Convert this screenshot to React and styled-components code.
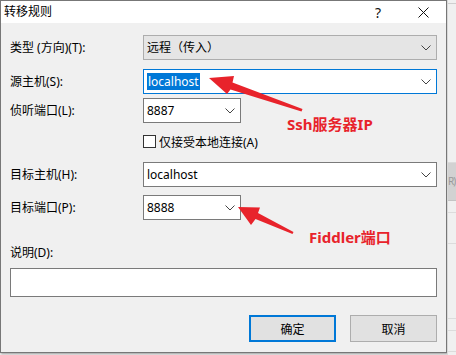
import styled, { createGlobalStyle } from "styled-components";

const GlobalStyle = createGlobalStyle`
  html, body {
    margin: 0;
    padding: 0;
    background: #f0f0f0;
  }
  body {
    font-family: "Noto Sans", "Noto Sans CJK SC", sans-serif;
    font-size: 12px;
    color: #000;
    overflow: hidden;
  }
`;

const Desktop = styled.div`
  position: relative;
  width: 456px;
  height: 355px;
  display: flex;
  overflow: hidden;
`;

const Dialog = styled.div`
  width: 445px;
  height: 351px;
  border: 1px solid #777;
  background: #f0f0f0;
  box-shadow: 1px 1px 2px rgba(0, 0, 0, 0.35);
  display: flex;
  flex-direction: column;
  flex-shrink: 0;
`;

const TitleBar = styled.div`
  height: 22px;
  background: #fff;
  display: flex;
  align-items: center;
  padding-left: 3px;
`;

const Title = styled.div`
  flex: 1;
  font-size: 12px;
  line-height: 16px;
`;

const TitleButton = styled.div`
  width: ${(p) => p.w}px;
  display: flex;
  justify-content: center;
  align-items: center;
  font-size: 14px;
  color: #111;
`;

const Body = styled.div`
  padding: 0 9px 0 9px;
  display: flex;
  flex-direction: column;
`;

const Row = styled.div`
  display: flex;
  align-items: center;
  margin-top: ${(p) => p.mt}px;
`;

const Label = styled.div`
  width: 133px;
  line-height: 16px;
  white-space: nowrap;
`;

const Combo = styled.div`
  box-sizing: border-box;
  height: 25px;
  width: ${(p) => (p.narrow ? "98px" : "294px")};
  border: 1px solid ${(p) => (p.focus ? "#0078d7" : p.disabled ? "#adadad" : "#7a7a7a")};
  background: ${(p) => (p.disabled ? "#e5e5e5" : "#fff")};
  display: flex;
  align-items: center;
  padding: 0 5px 0 3px;
`;

const Value = styled.span`
  flex: 1;
  line-height: 17px;
  white-space: nowrap;
`;

const Selected = styled.span`
  background: #0078d7;
  color: #fff;
  padding: 0 1px;
`;

const Chevron = () => (
  <svg width="10" height="6" viewBox="0 0 10 6">
    <path d="M0.5 0.5 L5 5 L9.5 0.5" fill="none" stroke="#444" strokeWidth="1" />
  </svg>
);

const CheckRow = styled.label`
  display: flex;
  align-items: center;
  gap: 3px;
  margin-left: 133px;
  margin-top: ${(p) => p.mt}px;
  height: 13px;
`;

const Box = styled.span`
  box-sizing: border-box;
  width: 13px;
  height: 13px;
  border: 1px solid #333;
  background: #fff;
`;

const Note = styled.div`
  box-sizing: border-box;
  height: 29px;
  width: 427px;
  border: 1px solid #7a7a7a;
  background: #fff;
  margin-top: ${(p) => p.mt}px;
`;

const Buttons = styled.div`
  display: flex;
  justify-content: flex-end;
  gap: 14px;
  margin-top: 18px;
  width: 427px;
`;

const Button = styled.div`
  box-sizing: border-box;
  width: 87px;
  height: 27px;
  background: #e1e1e1;
  border: ${(p) => (p.primary ? "2px solid #0078d7" : "1px solid #adadad")};
  display: flex;
  align-items: center;
  justify-content: center;
`;

const Backdrop = styled.div`
  flex: 1;
  display: flex;
  flex-direction: column;
  background: #f0f0f0;
  border-left: 1px solid #d8d8d8;
`;

const Band = styled.div`
  height: ${(p) => p.h}px;
  background: ${(p) => p.bg || "#f0f0f0"};
  border-bottom: 1px solid ${(p) => p.line || "#dcdcdc"};
  color: #999;
  font-size: 10px;
  letter-spacing: -1px;
  line-height: ${(p) => p.h}px;
  overflow: hidden;
  white-space: nowrap;
`;

const Overlay = styled.svg`
  position: absolute;
  left: 0;
  top: 0;
  pointer-events: none;
`;

const Annotation = styled.div`
  position: absolute;
  left: ${(p) => p.x}px;
  top: ${(p) => p.y}px;
  color: #e8232b;
  font-family: "Noto Sans", "Noto Sans CJK SC", sans-serif;
  font-weight: bold;
  font-size: 15px;
  line-height: 16px;
  white-space: nowrap;
`;

export default function App() {
  return (
    <Desktop>
      <GlobalStyle />
      <Dialog>
        <TitleBar>
          <Title>转移规则</Title>
          <TitleButton w={44}>?</TitleButton>
          <TitleButton w={46}>
            <svg width="11" height="11" viewBox="0 0 11 11">
              <path d="M0.5 0.5 L10.5 10.5 M10.5 0.5 L0.5 10.5" stroke="#111" strokeWidth="1" />
            </svg>
          </TitleButton>
        </TitleBar>
        <Body>
          <Row mt={12}>
            <Label>类型 (方向)(T):</Label>
            <Combo disabled>
              <Value>远程（传入）</Value>
              <Chevron />
            </Combo>
          </Row>
          <Row mt={9}>
            <Label>源主机(S):</Label>
            <Combo focus>
              <Value>
                <Selected>localhost</Selected>
              </Value>
              <Chevron />
            </Combo>
          </Row>
          <Row mt={4}>
            <Label>侦听端口(L):</Label>
            <Combo narrow>
              <Value>8887</Value>
              <Chevron />
            </Combo>
          </Row>
          <CheckRow mt={12}>
            <Box />
            <span>仅接受本地连接(A)</span>
          </CheckRow>
          <Row mt={14}>
            <Label>目标主机(H):</Label>
            <Combo>
              <Value>localhost</Value>
              <Chevron />
            </Combo>
          </Row>
          <Row mt={8}>
            <Label>目标端口(P):</Label>
            <Combo narrow>
              <Value>8888</Value>
              <Chevron />
            </Combo>
          </Row>
          <Row mt={25}>
            <Label>说明(D):</Label>
          </Row>
          <Note mt={7} />
          <Buttons>
            <Button primary>确定</Button>
            <Button>取消</Button>
          </Buttons>
        </Body>
      </Dialog>
      <Backdrop>
        <Band h={3} line="#cfcfcf" />
        <Band h={158} />
        <Band h={37} bg="#d2d2d2" line="#c4c4c4">R)</Band>
        <Band h={11} />
        <Band h={30} />
        <Band h={74} />
        <Band h={11} />
        <Band h={20} />
      </Backdrop>
      <Overlay width="456" height="355" viewBox="0 0 456 355">
        <polygon
          fill="#e8232b"
          points="209,78 234,76 232.5,82.5 302.5,109 301.5,111.5 230.5,89.5 227,94"
        />
        <polygon
          fill="#e8232b"
          points="238,207 260,207.5 258,213 293.5,232 292.5,234 255.5,219 251,225"
        />
      </Overlay>
      <Annotation x={287} y={116}>Ssh服务器IP</Annotation>
      <Annotation x={309} y={229}>Fiddler端口</Annotation>
    </Desktop>
  );
}
